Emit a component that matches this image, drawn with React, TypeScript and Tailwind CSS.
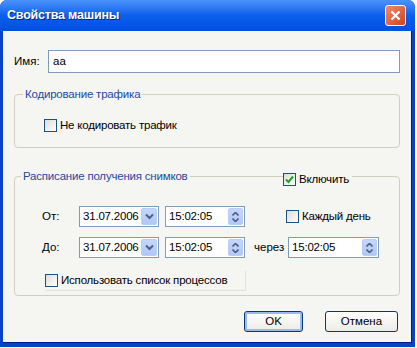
import React from "react";

const font = { fontFamily: '"Liberation Sans", Arial, sans-serif' };

function CheckBox({ checked = false, label }: { checked?: boolean; label: string }) {
  return (
    <label className="flex items-center gap-[3px] text-[11.5px] tracking-[-0.2px] text-black">
      <span className="flex h-[13px] w-[13px] items-center justify-center border border-[#1c5180] bg-gradient-to-br from-[#dcdcd7] to-white">
        {checked && (
          <svg width="9" height="9" viewBox="0 0 9 9">
            <path d="M1 4.5 L3.5 7 L8 1.5" stroke="#21a121" strokeWidth="2" fill="none" />
          </svg>
        )}
      </span>
      {label}
    </label>
  );
}

function DateBox({ value }: { value: string }) {
  return (
    <div className="flex h-[21px] w-[80px] items-center border border-[#7f9db9] bg-white pl-[3px] pr-[1px]">
      <span className="flex-1 text-[11.5px] tracking-[-0.2px]">{value}</span>
      <span className="flex h-[17px] w-[16px] items-center justify-center rounded-[2px] border border-[#b9cdf7] bg-gradient-to-b from-[#c6d6fb] to-[#b1c7f6]">
        <svg width="9" height="7" viewBox="0 0 9 7">
          <path d="M1 1.5 L4.5 5 L8 1.5" stroke="#4d6185" strokeWidth="2" fill="none" />
        </svg>
      </span>
    </div>
  );
}

function SpinBox({ value, w }: { value: string; w: string }) {
  return (
    <div className={`flex h-[21px] ${w} items-center border border-[#7f9db9] bg-white pl-[3px] pr-[1px]`}>
      <span className="flex-1 text-[11.5px] tracking-[-0.2px]">{value}</span>
      <span className="flex h-[17px] w-[15px] flex-col items-center justify-center gap-[2px] rounded-[2px] border border-[#b9cdf7] bg-gradient-to-b from-[#c6d6fb] to-[#b1c7f6]">
        <svg width="7" height="4" viewBox="0 0 7 4">
          <path d="M0.5 3.5 L3.5 0.5 L6.5 3.5" stroke="#4d6185" strokeWidth="1.6" fill="none" />
        </svg>
        <svg width="7" height="4" viewBox="0 0 7 4">
          <path d="M0.5 0.5 L3.5 3.5 L6.5 0.5" stroke="#4d6185" strokeWidth="1.6" fill="none" />
        </svg>
      </span>
    </div>
  );
}

function XpButton({ label, focused = false }: { label: string; focused?: boolean }) {
  return (
    <button
      className={`h-[21px] rounded-[3px] border border-[#003c74] bg-gradient-to-b from-white to-[#ecebe6] text-[11.5px] text-black ${
        focused ? "w-[59px] shadow-[inset_0_0_0_2px_#9fb9ec]" : "w-[73px]"
      }`}
    >
      {label}
    </button>
  );
}

export default function App() {
  return (
    <div className="h-[348px] w-[417px] bg-white" style={font}>
      <div className="flex h-[347px] w-[415px] flex-col rounded-t-[7px] bg-[#0842c6]">
        {/* заголовок */}
        <div className="flex h-[31px] items-center justify-between rounded-t-[7px] bg-gradient-to-b from-[#4a93fa] via-[#0a5fec] to-[#0050de] pl-[7px] pr-[9px]">
          <span className="text-[12.5px] font-bold tracking-[-0.2px] text-white [text-shadow:1px_1px_0_#0a2a7a]">
            Свойства машины
          </span>
          <span className="flex h-[21px] w-[21px] items-center justify-center rounded-[3px] border border-white bg-gradient-to-br from-[#f08a6a] to-[#cf3f1c]">
            <svg width="11" height="11" viewBox="0 0 11 11">
              <path d="M1.5 1.5 L9.5 9.5 M9.5 1.5 L1.5 9.5" stroke="white" strokeWidth="2.2" />
            </svg>
          </span>
        </div>

        {/* клиентская область */}
        <div className="mb-[4px] ml-[3px] mr-[3px] flex flex-1 flex-col border-r border-b border-[#001c8a] bg-[#f5f5f2] px-[11px] pt-[19px]">
          <div className="flex items-center">
            <span className="w-[34px] text-[11.5px]">Имя:</span>
            <div className="flex h-[23px] flex-1 items-center border border-[#7f9db9] bg-white px-[4px] text-[11.5px]">
              aa
            </div>
          </div>

          <fieldset className="mt-[13px] h-[62px] rounded-[4px] border border-[#d0d0bf] pl-[29px]">
            <legend className="ml-[-21px] px-[2px] text-[11.5px] tracking-[-0.2px] text-[#1f4aa0]">
              Кодирование трафика
            </legend>
            <div className="mt-[14px]">
              <CheckBox label="Не кодировать трафик" />
            </div>
          </fieldset>

          <fieldset className="relative mt-[20px] h-[128px] rounded-[4px] border border-[#d0d0bf] pl-[27px]">
            <legend className="ml-[-21px] px-[2px] text-[11.5px] tracking-[-0.2px] text-[#1f4aa0]">
              Расписание получения снимков
            </legend>
            <div className="absolute left-[268px] top-[-14px] bg-[#f5f5f2] pr-[3px]">
              <CheckBox checked label="Включить" />
            </div>

            <div className="mt-[21px] flex items-center">
              <span className="w-[37px] text-[11.5px]">От:</span>
              <DateBox value="31.07.2006" />
              <div className="ml-[6px]">
                <SpinBox value="15:02:05" w="w-[80px]" />
              </div>
              <div className="ml-[41px]">
                <CheckBox label="Каждый день" />
              </div>
            </div>

            <div className="mt-[10px] flex items-center">
              <span className="w-[37px] text-[11.5px]">До:</span>
              <DateBox value="31.07.2006" />
              <div className="ml-[6px]">
                <SpinBox value="15:02:05" w="w-[80px]" />
              </div>
              <span className="ml-[9px] w-[34px] text-[11.5px]">через</span>
              <div>
                <SpinBox value="15:02:05" w="w-[91px]" />
              </div>
            </div>

            <div className="mt-[13px] ml-[3px] flex h-[20px] w-[201px] items-center border-r border-b border-[#e2e2dc]">
              <CheckBox label="Использовать список процессов" />
            </div>
          </fieldset>

          <div className="mt-[15px] flex justify-end gap-[22px] pr-[2px]">
            <XpButton label="OK" focused />
            <XpButton label="Отмена" />
          </div>
        </div>
      </div>
    </div>
  );
}
